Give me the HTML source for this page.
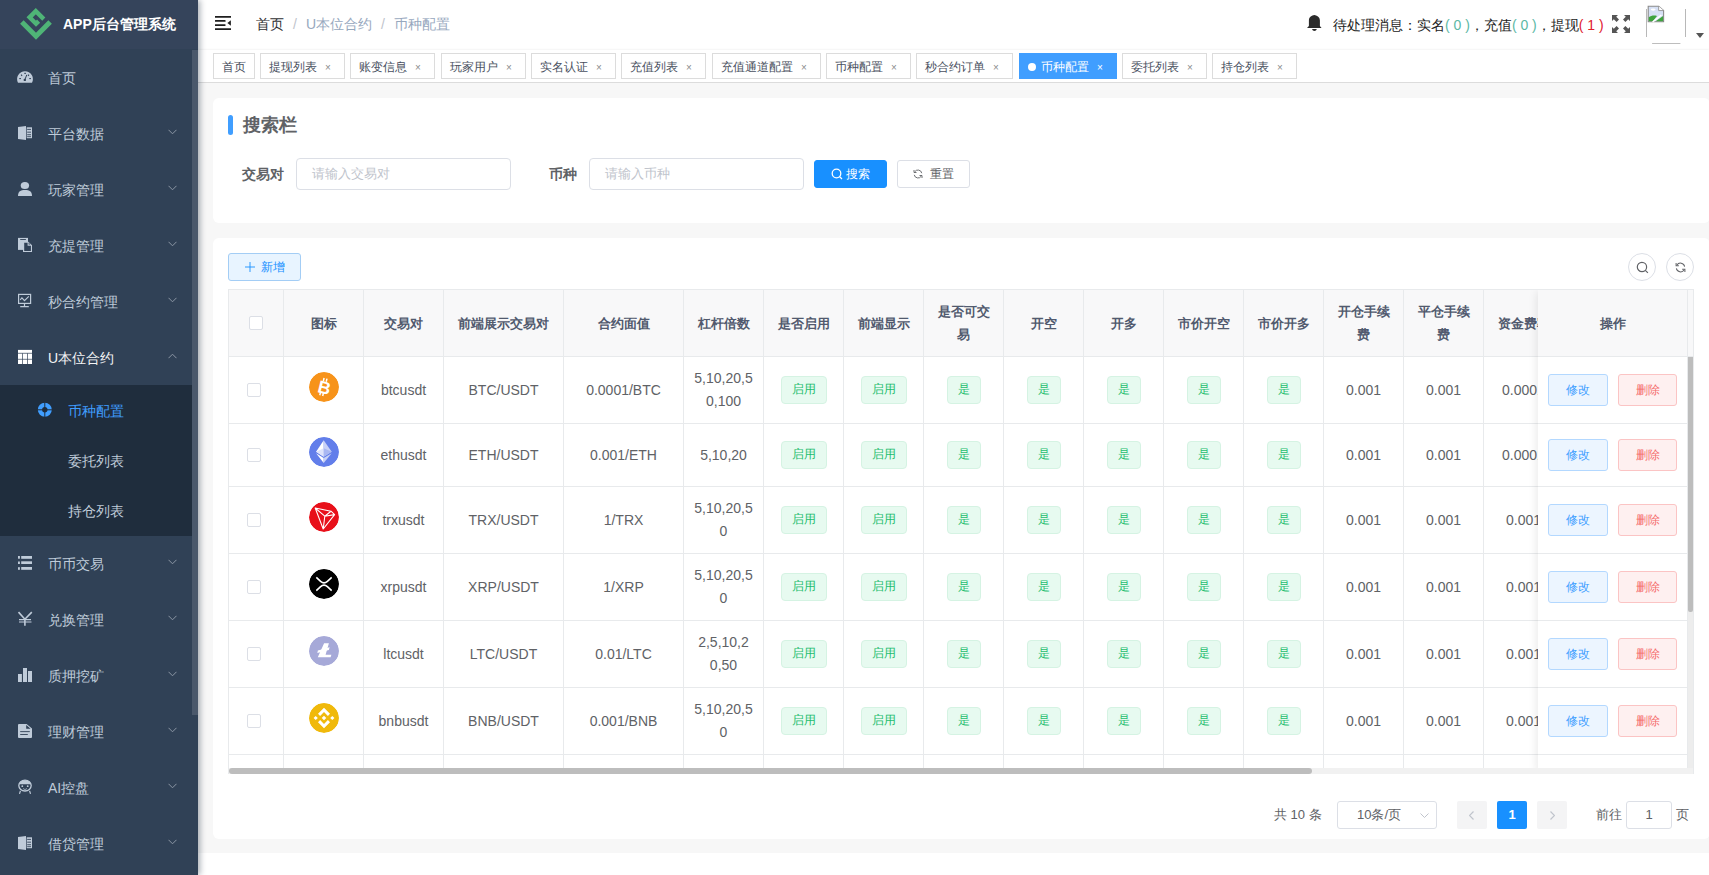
<!DOCTYPE html><html><head><meta charset="utf-8"><style>
*{box-sizing:border-box;margin:0;padding:0}
html,body{width:1709px;height:875px;overflow:hidden;background:#fff;font-family:"Liberation Sans",sans-serif}
.abs{position:absolute}
#sb{position:absolute;left:0;top:0;width:198px;height:875px;background:#304156;overflow:hidden;z-index:5;box-shadow:2px 0 6px rgba(0,21,41,.35)}
#sb .logo{position:absolute;left:0;top:0;width:198px;height:49px;background:#35445b}
#sb .title{position:absolute;left:63px;top:15px;color:#fff;font-weight:bold;font-size:14px;line-height:18px;white-space:nowrap}
.mi{position:absolute;left:0;width:192px;height:56px;color:#bfcbd9;font-size:14px}
.mi .ic{position:absolute;left:12px;top:12px;width:30px;height:30px}
.mi .tx{position:absolute;left:48px;top:0;line-height:56px;white-space:nowrap}
.mi .ar{position:absolute;left:168px;top:23px;width:9px;height:6px}
.sub{position:absolute;left:0;top:385px;width:192px;height:151px;background:#1f2d3d}
.si{position:absolute;left:0;width:192px;height:50px;color:#bfcbd9;font-size:14px;margin-top:1px}
.si .tx{position:absolute;left:68px;top:0;line-height:50px;white-space:nowrap}
#sbscroll{position:absolute;left:192px;top:50px;width:6px;height:665px;background:#4a586b}
#nav{position:absolute;left:198px;top:0;width:1511px;height:50px;background:#fff}
#tags{position:absolute;left:198px;top:50px;width:1511px;height:33px;background:#fff;border-bottom:1px solid #dcdcdc;box-shadow:0 1px 3px 0 rgba(0,0,0,.12),0 0 3px 0 rgba(0,0,0,.04)}
.tag{position:absolute;top:3px;height:26px;border:1px solid #dcdcdc;background:#fff;color:#495060;font-size:12px;line-height:24px;padding:1px 8px 0;white-space:nowrap}
.tag .x{display:inline-block;width:16px;text-align:center;color:#8c8c8c;font-size:10px;margin-left:3px}
.tag.on{background:#409eff;border-color:#409eff;color:#fff}
.tag.on .x{color:#fff}
.tag.on:before{content:"";display:inline-block;width:8px;height:8px;border-radius:50%;background:#fff;margin-right:5px;vertical-align:0px}
#main{position:absolute;left:198px;top:83px;width:1511px;height:792px;background:#f7f7f7}
.card{position:absolute;background:#fff;border-radius:6px}
.lbl{position:absolute;font-size:14px;font-weight:bold;color:#606266;line-height:32px;white-space:nowrap}
.inp{position:absolute;height:32px;border:1px solid #dcdfe6;border-radius:4px;background:#fff;font-size:13px;color:#c0c4cc;line-height:30px;padding-left:15px;white-space:nowrap}
.btn{position:absolute;height:28px;border-radius:3px;font-size:12px;line-height:26px;text-align:center;white-space:nowrap}
.th,.td{position:absolute;border-right:1px solid #e8eaec;border-bottom:1px solid #e8eaec;display:flex;align-items:center;justify-content:center;text-align:center}
.th{background:#f8f8f9;color:#515a6e;font-weight:bold;font-size:13px;line-height:23px}
.td{background:#fff;color:#606266;font-size:14px;line-height:23px}
.cb{width:14px;height:14px;border:1px solid #dcdfe6;border-radius:2px;background:#fff}
.etag{display:inline-block;height:28px;line-height:25px;padding:0 10px;font-size:12px;color:#1dbd6e;background:#e7faf0;border:1px solid #d5f3e3;border-radius:4px}
.coin{width:30px;height:30px;border-radius:50%}
.pbtn{position:absolute;height:32px;width:60px;border-radius:3px;font-size:12px;line-height:30px;text-align:center}
</style></head><body>
<div id="sb">
<div class="logo">
<svg class="abs" style="left:15px;top:4px" width="45" height="40" viewBox="15 4 45 40"><path d="M21.85 22 L36 36.2 L50.1 22.1" fill="none" stroke="#4fb477" stroke-width="5" stroke-linejoin="miter"/><path d="M43.8 19.1 L35.8 11.15 L29.6 17.35 L36 23.7 L38.6 21.1" fill="none" stroke="#4fb477" stroke-width="4.4" stroke-linejoin="miter"/></svg>
<div class="title">APP后台管理系统</div>
</div>
<div class="mi" style="top:50px"><svg class="ic" viewBox="0 0 30 30"><path d="M6 20.7 A7.9 7.9 0 1 1 20 20.7 Z" fill="#bfcbd9"/><g fill="#304156"><rect x="7.3" y="16" width="1.6" height="1.1"/><rect x="9" y="12.5" width="1.1" height="1.5" transform="rotate(-40 9.5 13.2)"/><rect x="12.3" y="10.8" width="1.6" height="1.1"/><rect x="16" y="12.5" width="1.1" height="1.5" transform="rotate(40 16.5 13.2)"/><rect x="17.3" y="16" width="1.6" height="1.1"/><circle cx="12.8" cy="17.9" r="1.2"/></g><path d="M12.8 17.9 L14.8 12.8" stroke="#304156" stroke-width="1"/></svg><div class="tx">首页</div></div>
<div class="mi" style="top:106px"><svg class="ic" viewBox="0 0 30 30"><path d="M6 9 L14 8 L14 22 L6 21 Z" fill="#bfcbd9"/><rect x="14.7" y="9.3" width="5.3" height="10.9" fill="#bfcbd9"/><g fill="#304156"><rect x="15.2" y="10.9" width="3.8" height="0.9"/><rect x="15.2" y="13.7" width="3.8" height="0.9"/><rect x="15.2" y="16.3" width="3.8" height="0.9"/><rect x="15.2" y="18.3" width="3.8" height="0.8"/></g></svg><div class="tx">平台数据</div><svg class="ar" viewBox="0 0 9 6"><path d="M0.5 0.8 L4.5 4.8 L8.5 0.8" fill="none" stroke="#8c97a5" stroke-width="1"/></svg></div>
<div class="mi" style="top:162px"><svg class="ic" viewBox="0 0 30 30"><ellipse cx="12.9" cy="11.5" rx="4.2" ry="3.6" fill="#bfcbd9"/><path d="M6 22 C6 17.5 8.5 16 13 16 C17.5 16 20 17.5 20 22 Z" fill="#bfcbd9"/></svg><div class="tx">玩家管理</div><svg class="ar" viewBox="0 0 9 6"><path d="M0.5 0.8 L4.5 4.8 L8.5 0.8" fill="none" stroke="#8c97a5" stroke-width="1"/></svg></div>
<div class="mi" style="top:218px"><svg class="ic" viewBox="0 0 30 30"><rect x="6" y="7.9" width="10" height="12" fill="#bfcbd9"/><rect x="8.2" y="9" width="5.7" height="0.9" fill="#304156"/><path d="M11 11.7 H16.3 L20 15.3 V22 H11 Z" fill="#bfcbd9"/><path d="M12.2 12.7 H15.6 V15.8 H18.9 V20.9 H12.2 Z" fill="#304156"/><path d="M16.6 12.6 L18.4 14.5 H16.6 Z" fill="#304156"/></svg><div class="tx">充提管理</div><svg class="ar" viewBox="0 0 9 6"><path d="M0.5 0.8 L4.5 4.8 L8.5 0.8" fill="none" stroke="#8c97a5" stroke-width="1"/></svg></div>
<div class="mi" style="top:274px"><svg class="ic" viewBox="0 0 30 30"><rect x="6.6" y="8.4" width="12" height="9" fill="none" stroke="#bfcbd9" stroke-width="1.2"/><path d="M8.2 13.8 L9.9 11.8 L12.5 14.7 L16.8 10.3" fill="none" stroke="#bfcbd9" stroke-width="1.1"/><path d="M12.5 17.8 V20.5 M8.2 20.6 H16.8" stroke="#bfcbd9" stroke-width="1.2"/></svg><div class="tx">秒合约管理</div><svg class="ar" viewBox="0 0 9 6"><path d="M0.5 0.8 L4.5 4.8 L8.5 0.8" fill="none" stroke="#8c97a5" stroke-width="1"/></svg></div>
<div class="mi" style="top:330px;color:#f4f4f5"><svg class="ic" viewBox="0 0 30 30"><rect x="6" y="7.9" width="14" height="14.1" fill="#fff"/><path d="M6 11.3 H20 M6 17.3 H20 M10.5 11.3 V22 M15.5 11.3 V22" stroke="#304156" stroke-width="0.7"/></svg><div class="tx">U本位合约</div><svg class="ar" viewBox="0 0 9 6"><path d="M0.5 5.2 L4.5 1.2 L8.5 5.2" fill="none" stroke="#8c97a5" stroke-width="1"/></svg></div>
<div class="sub">
<div class="si" style="top:0;color:#409eff"><svg class="abs" style="left:30px;top:10px" width="30" height="30" viewBox="0 0 30 30"><circle cx="14.8" cy="13.8" r="4.85" fill="none" stroke="#409eff" stroke-width="4.3"/><path d="M14.8 6V21.6M7 13.8H22.6" stroke="#1f2d3d" stroke-width="1"/></svg><div class="tx">币种配置</div></div>
<div class="si" style="top:50px"><div class="tx">委托列表</div></div>
<div class="si" style="top:100px"><div class="tx">持仓列表</div></div>
</div>
<div class="mi" style="top:536px"><svg class="ic" viewBox="0 0 30 30"><g fill="#bfcbd9"><rect x="6" y="8" width="1.9" height="2.7"/><rect x="6" y="13.5" width="1.9" height="2.5"/><rect x="6" y="19.2" width="1.9" height="2.6"/><rect x="9.2" y="8" width="10.8" height="2.8"/><rect x="9.2" y="13.3" width="10.8" height="2.7"/><rect x="9.2" y="19" width="10.8" height="2.8"/></g></svg><div class="tx">币币交易</div><svg class="ar" viewBox="0 0 9 6"><path d="M0.5 0.8 L4.5 4.8 L8.5 0.8" fill="none" stroke="#8c97a5" stroke-width="1"/></svg></div>
<div class="mi" style="top:592px"><svg class="ic" viewBox="0 0 30 30"><path d="M6.5 8.1 L12.9 15.2 L19.8 8.1 M12.9 15 V21.8" fill="none" stroke="#bfcbd9" stroke-width="1.6"/><path d="M7 15.6 H19 M7 18 H19.5" stroke="#bfcbd9" stroke-width="1.2"/></svg><div class="tx">兑换管理</div><svg class="ar" viewBox="0 0 9 6"><path d="M0.5 0.8 L4.5 4.8 L8.5 0.8" fill="none" stroke="#8c97a5" stroke-width="1"/></svg></div>
<div class="mi" style="top:648px"><svg class="ic" viewBox="0 0 30 30"><g fill="#bfcbd9"><rect x="6" y="14" width="3.9" height="8"/><rect x="11" y="8" width="4" height="14"/><rect x="16" y="11" width="4" height="11"/></g></svg><div class="tx">质押挖矿</div><svg class="ar" viewBox="0 0 9 6"><path d="M0.5 0.8 L4.5 4.8 L8.5 0.8" fill="none" stroke="#8c97a5" stroke-width="1"/></svg></div>
<div class="mi" style="top:704px"><svg class="ic" viewBox="0 0 30 30"><path d="M7 7.9 H14.6 L20 12.4 V21 Q20 22 19 22 H7 Q6 22 6 21 V8.9 Q6 7.9 7 7.9 Z" fill="#bfcbd9"/><path d="M14.2 9 V12.8 H18.6 Z" fill="#304156"/><rect x="8.2" y="15.2" width="9.6" height="0.9" fill="#304156"/><rect x="8.2" y="18.1" width="7.6" height="0.9" fill="#304156"/></svg><div class="tx">理财管理</div><svg class="ar" viewBox="0 0 9 6"><path d="M0.5 0.8 L4.5 4.8 L8.5 0.8" fill="none" stroke="#8c97a5" stroke-width="1"/></svg></div>
<div class="mi" style="top:760px"><svg class="ic" viewBox="0 0 30 30"><ellipse cx="13" cy="13.6" rx="6.2" ry="5.4" fill="none" stroke="#bfcbd9" stroke-width="1.3"/><path d="M7 12.2 A6.2 5.4 0 0 1 19 12.2 Z" fill="#bfcbd9"/><circle cx="10.3" cy="14.2" r="0.9" fill="#bfcbd9"/><circle cx="15.7" cy="14.2" r="0.9" fill="#bfcbd9"/><path d="M11 16.5 L13 17.6 L15 16.5" fill="none" stroke="#bfcbd9" stroke-width="0.7"/><path d="M8.4 18.8 L7.5 21.8 M17.6 18.8 L18.5 21.8" stroke="#bfcbd9" stroke-width="1.2"/></svg><div class="tx">AI控盘</div><svg class="ar" viewBox="0 0 9 6"><path d="M0.5 0.8 L4.5 4.8 L8.5 0.8" fill="none" stroke="#8c97a5" stroke-width="1"/></svg></div>
<div class="mi" style="top:816px"><svg class="ic" viewBox="0 0 30 30"><path d="M6 9 L14 8 L14 22 L6 21 Z" fill="#bfcbd9"/><rect x="14.7" y="9.3" width="5.3" height="10.9" fill="#bfcbd9"/><g fill="#304156"><rect x="15.2" y="10.9" width="3.8" height="0.9"/><rect x="15.2" y="13.7" width="3.8" height="0.9"/><rect x="15.2" y="16.3" width="3.8" height="0.9"/><rect x="15.2" y="18.3" width="3.8" height="0.8"/></g></svg><div class="tx">借贷管理</div><svg class="ar" viewBox="0 0 9 6"><path d="M0.5 0.8 L4.5 4.8 L8.5 0.8" fill="none" stroke="#8c97a5" stroke-width="1"/></svg></div>
<div id="sbscroll"></div>
</div>
<div id="nav">
<svg class="abs" style="left:17px;top:15px" width="16" height="16" viewBox="0 0 16 16"><path d="M0.2 1.8H15.8M0.5 5.95H9.8M0.5 10.1H9.8M0.2 14.05H15.8" stroke="#1f1f1f" stroke-width="1.8" stroke-linecap="round"/><path d="M15.9 5.2 L12.4 7.95 L15.9 10.7 Z" fill="#1f1f1f"/></svg>
<div class="abs" style="left:58px;top:-1px;line-height:50px;font-size:14px;white-space:nowrap"><span style="color:#303133">首页</span><span style="color:#c0c4cc;margin:0 9px;">/</span><span style="color:#97a8be">U本位合约</span><span style="color:#c0c4cc;margin:0 9px;">/</span><span style="color:#97a8be">币种配置</span></div>
<svg class="abs" style="left:1109px;top:15px" width="15" height="17" viewBox="0 0 15 17"><path d="M7.3 0 C9.6 0.6 12.9 1.4 12.9 5.6 V11 L14.6 12.9 H0 L1.9 11 V5.6 C1.9 1.4 5 0.6 7.3 0 Z" fill="#2b2b2b"/><path d="M5 14.1 H9.8 C9.4 15.4 8.5 16 7.4 16 C6.3 16 5.4 15.4 5 14.1 Z" fill="#2b2b2b"/></svg>
<div class="abs" style="left:1135px;top:0;line-height:50px;font-size:14px;color:#222;white-space:nowrap">待处理消息：实名<span style="color:#5cb8a5">( 0 )</span>，充值<span style="color:#5cb8a5">( 0 )</span>，提现<span style="color:#e0202f">( 1 )</span></div>
<svg class="abs" style="left:1414px;top:15px" width="18" height="18" viewBox="0 0 18 18"><g fill="#555"><path d="M0 0H6L4.2 1.8L7 4.6L4.6 7L1.8 4.2L0 6Z"/><path d="M18 0H12L13.8 1.8L11 4.6L13.4 7L16.2 4.2L18 6Z"/><path d="M0 18H6L4.2 16.2L7 13.4L4.6 11L1.8 13.8L0 12Z"/><path d="M18 18H12L13.8 16.2L11 13.4L13.4 11L16.2 13.8L18 12Z"/></g></svg>
<svg class="abs" style="left:1446px;top:4px" width="44" height="42" viewBox="0 0 44 42"><path d="M2.5 5V33M41.5 5V33" stroke="#b8b8b8" stroke-width="1"/><path d="M8.5 39.5H36" stroke="#bdbdbd" stroke-width="1" stroke-linecap="round"/><g transform="translate(4.2 2.2) scale(1.1 0.97) translate(-2.5 -1.5)"><path d="M2.5 1.5 H12 L16.5 6 V17.5 H2.5 Z" fill="#d6e0f5" stroke="#8a8a8a" stroke-width="1"/><path d="M12 1.5 V6 H16.5" fill="#fff" stroke="#8a8a8a" stroke-width="0.8"/><ellipse cx="7" cy="5" rx="2.2" ry="1.1" fill="#fff"/><path d="M3 17 V13 C5 11 8 10.5 10.5 11.5 L6.8 17 Z" fill="#3fa33f"/><path d="M9.2 17 L16 11.5 V17 Z" fill="#3fa33f"/><path d="M6.5 17.8 L14.5 10.5" stroke="#fff" stroke-width="1.4"/></g></svg>
<svg class="abs" style="left:1498px;top:33px" width="8" height="5" viewBox="0 0 8 5"><path d="M0 0H8L4 5Z" fill="#555"/></svg>
</div>
<div id="tags">
<div class="tag" style="left:15px">首页</div>
<div class="tag" style="left:62px">提现列表<span class="x">×</span></div>
<div class="tag" style="left:152px">账变信息<span class="x">×</span></div>
<div class="tag" style="left:243px">玩家用户<span class="x">×</span></div>
<div class="tag" style="left:333px">实名认证<span class="x">×</span></div>
<div class="tag" style="left:423px">充值列表<span class="x">×</span></div>
<div class="tag" style="left:514px">充值通道配置<span class="x">×</span></div>
<div class="tag" style="left:628px">币种配置<span class="x">×</span></div>
<div class="tag" style="left:718px">秒合约订单<span class="x">×</span></div>
<div class="tag on" style="left:821px">币种配置<span class="x">×</span></div>
<div class="tag" style="left:924px">委托列表<span class="x">×</span></div>
<div class="tag" style="left:1014px">持仓列表<span class="x">×</span></div>
</div>
<div id="main">
<div class="card" style="left:15px;top:15px;width:1497px;height:125px">
<div class="abs" style="left:15px;top:17px;width:5px;height:20px;background:#409eff;border-radius:3px"></div>
<div class="abs" style="left:30px;top:12px;font-size:18px;font-weight:bold;color:#606266;line-height:30px">搜索栏</div>
<div class="lbl" style="left:29px;top:60px">交易对</div>
<div class="inp" style="left:83px;top:60px;width:215px">请输入交易对</div>
<div class="lbl" style="left:336px;top:60px">币种</div>
<div class="inp" style="left:376px;top:60px;width:215px">请输入币种</div>
<div class="btn" style="left:601px;top:62px;width:73px;background:#1890ff;color:#fff;border:1px solid #1890ff"><svg style="vertical-align:-2px;margin-right:3px" width="12" height="12" viewBox="0 0 12 12"><circle cx="5.5" cy="5.5" r="4.3" fill="none" stroke="#fff" stroke-width="1.3"/><path d="M8.6 8.6L11 11" stroke="#fff" stroke-width="1.3"/></svg>搜索</div>
<div class="btn" style="left:684px;top:62px;width:73px;background:#fff;color:#606266;border:1px solid #dcdfe6"><svg style="vertical-align:-1px;margin-right:7px" width="10" height="10" viewBox="0 0 12 12"><path d="M10.5 5 A4.6 4.6 0 0 0 2 3.5 M1.5 7 A4.6 4.6 0 0 0 10 8.5" fill="none" stroke="#606266" stroke-width="1.1"/><path d="M1.2 1.2V4.2H4.2M10.8 10.8V7.8H7.8" fill="none" stroke="#606266" stroke-width="1.1"/></svg>重置</div>
</div>
<div class="card" style="left:15px;top:155px;width:1497px;height:601px">
<div class="btn" style="left:15px;top:15px;width:73px;background:#e8f4ff;color:#1890ff;border:1px solid #a3cdf5"><svg style="vertical-align:-1px;margin-right:6px" width="10" height="10" viewBox="0 0 10 10"><path d="M5 0V10M0 5H10" stroke="#1890ff" stroke-width="0.9"/></svg>新增</div>
<div class="abs" style="left:1415px;top:15px;width:28px;height:28px;border:1px solid #dcdfe6;border-radius:50%"><svg class="abs" style="left:7px;top:7px" width="13" height="13" viewBox="0 0 12 12"><circle cx="5.5" cy="5.5" r="4.3" fill="none" stroke="#606266" stroke-width="1.1"/><path d="M8.6 8.6L11 11" stroke="#606266" stroke-width="1.1"/></svg></div>
<div class="abs" style="left:1453px;top:15px;width:28px;height:28px;border:1px solid #dcdfe6;border-radius:50%"><svg class="abs" style="left:8px;top:8px" width="11" height="11" viewBox="0 0 12 12"><path d="M10.5 5 A4.6 4.6 0 0 0 2 3.5 M1.5 7 A4.6 4.6 0 0 0 10 8.5" fill="none" stroke="#606266" stroke-width="1.1"/><path d="M1.2 1.2V4.2H4.2M10.8 10.8V7.8H7.8" fill="none" stroke="#606266" stroke-width="1.1"/></svg></div>
</div>
</div>
<div class="abs" style="left:228px;top:289px;width:1466px;height:485px;border:1px solid #e8eaec;border-bottom:none;overflow:hidden;background:#fff">
<div class="th" style="left:0px;top:0;width:55px;height:67px"><div class="cb"></div></div>
<div class="th" style="left:55px;top:0;width:80px;height:67px">图标</div>
<div class="th" style="left:135px;top:0;width:80px;height:67px">交易对</div>
<div class="th" style="left:215px;top:0;width:120px;height:67px">前端展示交易对</div>
<div class="th" style="left:335px;top:0;width:120px;height:67px">合约面值</div>
<div class="th" style="left:455px;top:0;width:80px;height:67px">杠杆倍数</div>
<div class="th" style="left:535px;top:0;width:80px;height:67px">是否启用</div>
<div class="th" style="left:615px;top:0;width:80px;height:67px">前端显示</div>
<div class="th" style="left:695px;top:0;width:80px;height:67px">是否可交<br>易</div>
<div class="th" style="left:775px;top:0;width:80px;height:67px">开空</div>
<div class="th" style="left:855px;top:0;width:80px;height:67px">开多</div>
<div class="th" style="left:935px;top:0;width:80px;height:67px">市价开空</div>
<div class="th" style="left:1015px;top:0;width:80px;height:67px">市价开多</div>
<div class="th" style="left:1095px;top:0;width:80px;height:67px">开仓手续<br>费</div>
<div class="th" style="left:1175px;top:0;width:80px;height:67px">平仓手续<br>费</div>
<div class="th" style="left:1255px;top:0;width:80px;height:67px">资金费率</div>
<div class="th" style="left:1335px;top:0;width:80px;height:67px"></div>
<div class="td" style="left:0px;top:67px;width:55px;height:67px"><div class="cb" style="margin-left:-4px"></div></div>
<div class="td" style="left:55px;top:67px;width:80px;height:67px"><div style="height:30px;margin-top:-6px"><svg class="coin" viewBox="0 0 30 30"><circle cx="15" cy="15" r="15" fill="#f7931a"/><g transform="rotate(14 15 15)"><text x="15.6" y="21.6" text-anchor="middle" font-family="Liberation Sans" font-weight="bold" font-size="17.5" fill="#fff">B</text><path d="M12.9 6.2v3.2M15.9 6.2v3.2M12.9 20.8v3.2M15.9 20.8v3.2" stroke="#fff" stroke-width="1.5"/></g></svg></div></div>
<div class="td" style="left:135px;top:67px;width:80px;height:67px"><div style="padding:0 10px;word-break:break-all">btcusdt</div></div>
<div class="td" style="left:215px;top:67px;width:120px;height:67px"><div style="padding:0 10px;word-break:break-all">BTC/USDT</div></div>
<div class="td" style="left:335px;top:67px;width:120px;height:67px"><div style="padding:0 10px;word-break:break-all">0.0001/BTC</div></div>
<div class="td" style="left:455px;top:67px;width:80px;height:67px"><div style="padding:0 10px;word-break:break-all">5,10,20,5<br>0,100</div></div>
<div class="td" style="left:535px;top:67px;width:80px;height:67px"><span class="etag">启用</span></div>
<div class="td" style="left:615px;top:67px;width:80px;height:67px"><span class="etag">启用</span></div>
<div class="td" style="left:695px;top:67px;width:80px;height:67px"><span class="etag">是</span></div>
<div class="td" style="left:775px;top:67px;width:80px;height:67px"><span class="etag">是</span></div>
<div class="td" style="left:855px;top:67px;width:80px;height:67px"><span class="etag">是</span></div>
<div class="td" style="left:935px;top:67px;width:80px;height:67px"><span class="etag">是</span></div>
<div class="td" style="left:1015px;top:67px;width:80px;height:67px"><span class="etag">是</span></div>
<div class="td" style="left:1095px;top:67px;width:80px;height:67px"><div style="padding:0 10px;word-break:break-all">0.001</div></div>
<div class="td" style="left:1175px;top:67px;width:80px;height:67px"><div style="padding:0 10px;word-break:break-all">0.001</div></div>
<div class="td" style="left:1255px;top:67px;width:80px;height:67px"><div style="padding:0 10px;word-break:break-all">0.0001</div></div>
<div class="td" style="left:1335px;top:67px;width:80px;height:67px"><div style="padding:0 10px;word-break:break-all"></div></div>
<div class="td" style="left:0px;top:134px;width:55px;height:63px"><div class="cb" style="margin-left:-4px"></div></div>
<div class="td" style="left:55px;top:134px;width:80px;height:63px"><div style="height:30px;margin-top:-6px"><svg class="coin" viewBox="0 0 30 30"><circle cx="15" cy="15" r="15" fill="#627eea"/><path d="M14.7 3.2 L7.1 14.7 L14.7 19.7 Z" fill="#fff"/><path d="M14.7 3.2 L22.7 14.7 L14.7 19.7 Z" fill="#c8d1f6"/><path d="M7.1 14.7 L14.7 11.3 L14.7 19.7 Z" fill="#dfe4fb"/><path d="M22.7 14.7 L14.7 11.3 L14.7 19.7 Z" fill="#a9b7f2"/><path d="M7.1 16.3 L14.7 21.1 L14.7 26.1 Z" fill="#fff"/><path d="M22.7 16.3 L14.7 21.1 L14.7 26.1 Z" fill="#c8d1f6"/></svg></div></div>
<div class="td" style="left:135px;top:134px;width:80px;height:63px"><div style="padding:0 10px;word-break:break-all">ethusdt</div></div>
<div class="td" style="left:215px;top:134px;width:120px;height:63px"><div style="padding:0 10px;word-break:break-all">ETH/USDT</div></div>
<div class="td" style="left:335px;top:134px;width:120px;height:63px"><div style="padding:0 10px;word-break:break-all">0.001/ETH</div></div>
<div class="td" style="left:455px;top:134px;width:80px;height:63px"><div style="padding:0 10px;word-break:break-all">5,10,20</div></div>
<div class="td" style="left:535px;top:134px;width:80px;height:63px"><span class="etag">启用</span></div>
<div class="td" style="left:615px;top:134px;width:80px;height:63px"><span class="etag">启用</span></div>
<div class="td" style="left:695px;top:134px;width:80px;height:63px"><span class="etag">是</span></div>
<div class="td" style="left:775px;top:134px;width:80px;height:63px"><span class="etag">是</span></div>
<div class="td" style="left:855px;top:134px;width:80px;height:63px"><span class="etag">是</span></div>
<div class="td" style="left:935px;top:134px;width:80px;height:63px"><span class="etag">是</span></div>
<div class="td" style="left:1015px;top:134px;width:80px;height:63px"><span class="etag">是</span></div>
<div class="td" style="left:1095px;top:134px;width:80px;height:63px"><div style="padding:0 10px;word-break:break-all">0.001</div></div>
<div class="td" style="left:1175px;top:134px;width:80px;height:63px"><div style="padding:0 10px;word-break:break-all">0.001</div></div>
<div class="td" style="left:1255px;top:134px;width:80px;height:63px"><div style="padding:0 10px;word-break:break-all">0.0001</div></div>
<div class="td" style="left:1335px;top:134px;width:80px;height:63px"><div style="padding:0 10px;word-break:break-all"></div></div>
<div class="td" style="left:0px;top:197px;width:55px;height:67px"><div class="cb" style="margin-left:-4px"></div></div>
<div class="td" style="left:55px;top:197px;width:80px;height:67px"><div style="height:30px;margin-top:-6px"><svg class="coin" viewBox="0 0 30 30"><circle cx="15" cy="15" r="15" fill="#e8101a"/><path d="M6.2 6 L22 9.2 L25.6 12.6 L14.2 27 Z M6.2 6 L15.8 14.2 L14.2 27 M15.8 14.2 L22 9.2 M15.8 14.2 L25.6 12.6" fill="none" stroke="#fff" stroke-width="1.1" stroke-linejoin="round"/></svg></div></div>
<div class="td" style="left:135px;top:197px;width:80px;height:67px"><div style="padding:0 10px;word-break:break-all">trxusdt</div></div>
<div class="td" style="left:215px;top:197px;width:120px;height:67px"><div style="padding:0 10px;word-break:break-all">TRX/USDT</div></div>
<div class="td" style="left:335px;top:197px;width:120px;height:67px"><div style="padding:0 10px;word-break:break-all">1/TRX</div></div>
<div class="td" style="left:455px;top:197px;width:80px;height:67px"><div style="padding:0 10px;word-break:break-all">5,10,20,5<br>0</div></div>
<div class="td" style="left:535px;top:197px;width:80px;height:67px"><span class="etag">启用</span></div>
<div class="td" style="left:615px;top:197px;width:80px;height:67px"><span class="etag">启用</span></div>
<div class="td" style="left:695px;top:197px;width:80px;height:67px"><span class="etag">是</span></div>
<div class="td" style="left:775px;top:197px;width:80px;height:67px"><span class="etag">是</span></div>
<div class="td" style="left:855px;top:197px;width:80px;height:67px"><span class="etag">是</span></div>
<div class="td" style="left:935px;top:197px;width:80px;height:67px"><span class="etag">是</span></div>
<div class="td" style="left:1015px;top:197px;width:80px;height:67px"><span class="etag">是</span></div>
<div class="td" style="left:1095px;top:197px;width:80px;height:67px"><div style="padding:0 10px;word-break:break-all">0.001</div></div>
<div class="td" style="left:1175px;top:197px;width:80px;height:67px"><div style="padding:0 10px;word-break:break-all">0.001</div></div>
<div class="td" style="left:1255px;top:197px;width:80px;height:67px"><div style="padding:0 10px;word-break:break-all">0.001</div></div>
<div class="td" style="left:1335px;top:197px;width:80px;height:67px"><div style="padding:0 10px;word-break:break-all"></div></div>
<div class="td" style="left:0px;top:264px;width:55px;height:67px"><div class="cb" style="margin-left:-4px"></div></div>
<div class="td" style="left:55px;top:264px;width:80px;height:67px"><div style="height:30px;margin-top:-6px"><svg class="coin" viewBox="0 0 30 30"><circle cx="15" cy="15" r="15" fill="#000"/><path d="M7.3 8.3 L11.6 12.3 Q15 15.4 18.4 12.3 L22.7 8.3 M7.3 21.7 L11.6 17.7 Q15 14.6 18.4 17.7 L22.7 21.7" fill="none" stroke="#fff" stroke-width="1.6"/></svg></div></div>
<div class="td" style="left:135px;top:264px;width:80px;height:67px"><div style="padding:0 10px;word-break:break-all">xrpusdt</div></div>
<div class="td" style="left:215px;top:264px;width:120px;height:67px"><div style="padding:0 10px;word-break:break-all">XRP/USDT</div></div>
<div class="td" style="left:335px;top:264px;width:120px;height:67px"><div style="padding:0 10px;word-break:break-all">1/XRP</div></div>
<div class="td" style="left:455px;top:264px;width:80px;height:67px"><div style="padding:0 10px;word-break:break-all">5,10,20,5<br>0</div></div>
<div class="td" style="left:535px;top:264px;width:80px;height:67px"><span class="etag">启用</span></div>
<div class="td" style="left:615px;top:264px;width:80px;height:67px"><span class="etag">启用</span></div>
<div class="td" style="left:695px;top:264px;width:80px;height:67px"><span class="etag">是</span></div>
<div class="td" style="left:775px;top:264px;width:80px;height:67px"><span class="etag">是</span></div>
<div class="td" style="left:855px;top:264px;width:80px;height:67px"><span class="etag">是</span></div>
<div class="td" style="left:935px;top:264px;width:80px;height:67px"><span class="etag">是</span></div>
<div class="td" style="left:1015px;top:264px;width:80px;height:67px"><span class="etag">是</span></div>
<div class="td" style="left:1095px;top:264px;width:80px;height:67px"><div style="padding:0 10px;word-break:break-all">0.001</div></div>
<div class="td" style="left:1175px;top:264px;width:80px;height:67px"><div style="padding:0 10px;word-break:break-all">0.001</div></div>
<div class="td" style="left:1255px;top:264px;width:80px;height:67px"><div style="padding:0 10px;word-break:break-all">0.001</div></div>
<div class="td" style="left:1335px;top:264px;width:80px;height:67px"><div style="padding:0 10px;word-break:break-all"></div></div>
<div class="td" style="left:0px;top:331px;width:55px;height:67px"><div class="cb" style="margin-left:-4px"></div></div>
<div class="td" style="left:55px;top:331px;width:80px;height:67px"><div style="height:30px;margin-top:-6px"><svg class="coin" viewBox="0 0 30 30"><circle cx="15" cy="15" r="15" fill="#a6a9d8"/><path d="M15.1 7.3 H19.9 L16.6 18.8 H22.4 L21.6 21.3 H8.8 Z" fill="#fff"/><path d="M8.9 14.4 L20.6 11.3 L19.9 14 L8.3 17 Z" fill="#fff"/></svg></div></div>
<div class="td" style="left:135px;top:331px;width:80px;height:67px"><div style="padding:0 10px;word-break:break-all">ltcusdt</div></div>
<div class="td" style="left:215px;top:331px;width:120px;height:67px"><div style="padding:0 10px;word-break:break-all">LTC/USDT</div></div>
<div class="td" style="left:335px;top:331px;width:120px;height:67px"><div style="padding:0 10px;word-break:break-all">0.01/LTC</div></div>
<div class="td" style="left:455px;top:331px;width:80px;height:67px"><div style="padding:0 10px;word-break:break-all">2,5,10,2<br>0,50</div></div>
<div class="td" style="left:535px;top:331px;width:80px;height:67px"><span class="etag">启用</span></div>
<div class="td" style="left:615px;top:331px;width:80px;height:67px"><span class="etag">启用</span></div>
<div class="td" style="left:695px;top:331px;width:80px;height:67px"><span class="etag">是</span></div>
<div class="td" style="left:775px;top:331px;width:80px;height:67px"><span class="etag">是</span></div>
<div class="td" style="left:855px;top:331px;width:80px;height:67px"><span class="etag">是</span></div>
<div class="td" style="left:935px;top:331px;width:80px;height:67px"><span class="etag">是</span></div>
<div class="td" style="left:1015px;top:331px;width:80px;height:67px"><span class="etag">是</span></div>
<div class="td" style="left:1095px;top:331px;width:80px;height:67px"><div style="padding:0 10px;word-break:break-all">0.001</div></div>
<div class="td" style="left:1175px;top:331px;width:80px;height:67px"><div style="padding:0 10px;word-break:break-all">0.001</div></div>
<div class="td" style="left:1255px;top:331px;width:80px;height:67px"><div style="padding:0 10px;word-break:break-all">0.001</div></div>
<div class="td" style="left:1335px;top:331px;width:80px;height:67px"><div style="padding:0 10px;word-break:break-all"></div></div>
<div class="td" style="left:0px;top:398px;width:55px;height:67px"><div class="cb" style="margin-left:-4px"></div></div>
<div class="td" style="left:55px;top:398px;width:80px;height:67px"><div style="height:30px;margin-top:-6px"><svg class="coin" viewBox="0 0 30 30"><circle cx="15" cy="15" r="15" fill="#f0b90b"/><g fill="#fff"><path d="M15 4.8 L21 10.8 L18.9 12.9 L15 9 L11.1 12.9 L9 10.8 Z"/><path d="M15 25.2 L21 19.2 L18.9 17.1 L15 21 L11.1 17.1 L9 19.2 Z"/><path d="M15 12.7 L17.3 15 L15 17.3 L12.7 15 Z"/><path d="M6.7 12.9 L8.8 15 L6.7 17.1 L4.6 15 Z"/><path d="M23.3 12.9 L25.4 15 L23.3 17.1 L21.2 15 Z"/></g></svg></div></div>
<div class="td" style="left:135px;top:398px;width:80px;height:67px"><div style="padding:0 10px;word-break:break-all">bnbusdt</div></div>
<div class="td" style="left:215px;top:398px;width:120px;height:67px"><div style="padding:0 10px;word-break:break-all">BNB/USDT</div></div>
<div class="td" style="left:335px;top:398px;width:120px;height:67px"><div style="padding:0 10px;word-break:break-all">0.001/BNB</div></div>
<div class="td" style="left:455px;top:398px;width:80px;height:67px"><div style="padding:0 10px;word-break:break-all">5,10,20,5<br>0</div></div>
<div class="td" style="left:535px;top:398px;width:80px;height:67px"><span class="etag">启用</span></div>
<div class="td" style="left:615px;top:398px;width:80px;height:67px"><span class="etag">启用</span></div>
<div class="td" style="left:695px;top:398px;width:80px;height:67px"><span class="etag">是</span></div>
<div class="td" style="left:775px;top:398px;width:80px;height:67px"><span class="etag">是</span></div>
<div class="td" style="left:855px;top:398px;width:80px;height:67px"><span class="etag">是</span></div>
<div class="td" style="left:935px;top:398px;width:80px;height:67px"><span class="etag">是</span></div>
<div class="td" style="left:1015px;top:398px;width:80px;height:67px"><span class="etag">是</span></div>
<div class="td" style="left:1095px;top:398px;width:80px;height:67px"><div style="padding:0 10px;word-break:break-all">0.001</div></div>
<div class="td" style="left:1175px;top:398px;width:80px;height:67px"><div style="padding:0 10px;word-break:break-all">0.001</div></div>
<div class="td" style="left:1255px;top:398px;width:80px;height:67px"><div style="padding:0 10px;word-break:break-all">0.001</div></div>
<div class="td" style="left:1335px;top:398px;width:80px;height:67px"><div style="padding:0 10px;word-break:break-all"></div></div>
<div class="td" style="left:0px;top:465px;width:55px;height:67px"><div class="cb" style="margin-left:-4px"></div></div>
<div class="td" style="left:55px;top:465px;width:80px;height:67px"><div style="height:30px;margin-top:-6px"><svg class="coin" viewBox="0 0 30 30"><circle cx="15" cy="15" r="15" fill="#f7931a"/><g transform="rotate(14 15 15)"><text x="15.6" y="21.6" text-anchor="middle" font-family="Liberation Sans" font-weight="bold" font-size="17.5" fill="#fff">B</text><path d="M12.9 6.2v3.2M15.9 6.2v3.2M12.9 20.8v3.2M15.9 20.8v3.2" stroke="#fff" stroke-width="1.5"/></g></svg></div></div>
<div class="td" style="left:135px;top:465px;width:80px;height:67px"><div style="padding:0 10px;word-break:break-all">dogeusdt</div></div>
<div class="td" style="left:215px;top:465px;width:120px;height:67px"><div style="padding:0 10px;word-break:break-all">DOGE/USDT</div></div>
<div class="td" style="left:335px;top:465px;width:120px;height:67px"><div style="padding:0 10px;word-break:break-all">1/DOGE</div></div>
<div class="td" style="left:455px;top:465px;width:80px;height:67px"><div style="padding:0 10px;word-break:break-all">5,10,20</div></div>
<div class="td" style="left:535px;top:465px;width:80px;height:67px"><span class="etag">启用</span></div>
<div class="td" style="left:615px;top:465px;width:80px;height:67px"><span class="etag">启用</span></div>
<div class="td" style="left:695px;top:465px;width:80px;height:67px"><span class="etag">是</span></div>
<div class="td" style="left:775px;top:465px;width:80px;height:67px"><span class="etag">是</span></div>
<div class="td" style="left:855px;top:465px;width:80px;height:67px"><span class="etag">是</span></div>
<div class="td" style="left:935px;top:465px;width:80px;height:67px"><span class="etag">是</span></div>
<div class="td" style="left:1015px;top:465px;width:80px;height:67px"><span class="etag">是</span></div>
<div class="td" style="left:1095px;top:465px;width:80px;height:67px"><div style="padding:0 10px;word-break:break-all">0.001</div></div>
<div class="td" style="left:1175px;top:465px;width:80px;height:67px"><div style="padding:0 10px;word-break:break-all">0.001</div></div>
<div class="td" style="left:1255px;top:465px;width:80px;height:67px"><div style="padding:0 10px;word-break:break-all">0.001</div></div>
<div class="td" style="left:1335px;top:465px;width:80px;height:67px"><div style="padding:0 10px;word-break:break-all"></div></div>
<div class="abs" style="left:1309px;top:0;width:150px;height:485px;background:#fff;box-shadow:-4px 0 8px -2px rgba(0,0,0,.08)">
<div class="th" style="left:0;top:0;width:149px;height:67px;border-right:none">操作</div>
<div class="td" style="left:0;top:67px;width:149px;height:67px;border-right:none"><div style="position:relative;width:149px;height:100%"><div class="pbtn" style="left:10px;top:17px;background:#ecf5ff;border:1px solid #b3d8ff;color:#409eff">修改</div><div class="pbtn" style="left:80px;top:17px;width:59px;background:#fef0f0;border:1px solid #fbc4c4;color:#f56c6c">删除</div></div></div>
<div class="td" style="left:0;top:134px;width:149px;height:63px;border-right:none"><div style="position:relative;width:149px;height:100%"><div class="pbtn" style="left:10px;top:15px;background:#ecf5ff;border:1px solid #b3d8ff;color:#409eff">修改</div><div class="pbtn" style="left:80px;top:15px;width:59px;background:#fef0f0;border:1px solid #fbc4c4;color:#f56c6c">删除</div></div></div>
<div class="td" style="left:0;top:197px;width:149px;height:67px;border-right:none"><div style="position:relative;width:149px;height:100%"><div class="pbtn" style="left:10px;top:17px;background:#ecf5ff;border:1px solid #b3d8ff;color:#409eff">修改</div><div class="pbtn" style="left:80px;top:17px;width:59px;background:#fef0f0;border:1px solid #fbc4c4;color:#f56c6c">删除</div></div></div>
<div class="td" style="left:0;top:264px;width:149px;height:67px;border-right:none"><div style="position:relative;width:149px;height:100%"><div class="pbtn" style="left:10px;top:17px;background:#ecf5ff;border:1px solid #b3d8ff;color:#409eff">修改</div><div class="pbtn" style="left:80px;top:17px;width:59px;background:#fef0f0;border:1px solid #fbc4c4;color:#f56c6c">删除</div></div></div>
<div class="td" style="left:0;top:331px;width:149px;height:67px;border-right:none"><div style="position:relative;width:149px;height:100%"><div class="pbtn" style="left:10px;top:17px;background:#ecf5ff;border:1px solid #b3d8ff;color:#409eff">修改</div><div class="pbtn" style="left:80px;top:17px;width:59px;background:#fef0f0;border:1px solid #fbc4c4;color:#f56c6c">删除</div></div></div>
<div class="td" style="left:0;top:398px;width:149px;height:67px;border-right:none"><div style="position:relative;width:149px;height:100%"><div class="pbtn" style="left:10px;top:17px;background:#ecf5ff;border:1px solid #b3d8ff;color:#409eff">修改</div><div class="pbtn" style="left:80px;top:17px;width:59px;background:#fef0f0;border:1px solid #fbc4c4;color:#f56c6c">删除</div></div></div>
<div class="td" style="left:0;top:465px;width:149px;height:67px;border-right:none"><div style="position:relative;width:149px;height:100%"><div class="pbtn" style="left:10px;top:17px;background:#ecf5ff;border:1px solid #b3d8ff;color:#409eff">修改</div><div class="pbtn" style="left:80px;top:17px;width:59px;background:#fef0f0;border:1px solid #fbc4c4;color:#f56c6c">删除</div></div></div>
</div>
<div class="abs" style="left:1458px;top:0;width:6px;height:485px;background:#ededed;border-left:1px solid #e8eaec"></div><div class="abs" style="left:1458px;top:0;width:6px;height:67px;background:#f8f8f9;border-left:1px solid #e8eaec;border-bottom:1px solid #e8eaec"></div>
<div class="abs" style="left:1459px;top:67px;width:5px;height:255px;background:#bdbdbd;border-radius:0 0 2px 2px"></div>
<div class="abs" style="left:0;top:478px;width:1466px;height:7px;background:#f1f1f1"></div>
<div class="abs" style="left:0;top:478px;width:1083px;height:6px;background:#bdbdbd;border-radius:3px"></div>
</div>
<div class="abs" style="left:1274px;top:801px;line-height:28px;font-size:13px;color:#606266;white-space:nowrap">共 10 条</div>
<div class="abs" style="left:1337px;top:801px;width:100px;height:28px;border:1px solid #dcdfe6;border-radius:3px;font-size:13px;color:#606266;line-height:26px;padding-left:19px">10条/页<svg class="abs" style="left:82px;top:11px" width="9" height="5" viewBox="0 0 9 5"><path d="M0.5 0.5L4.5 4.5L8.5 0.5" fill="none" stroke="#c0c4cc" stroke-width="1"/></svg></div>
<div class="abs" style="left:1457px;top:801px;width:30px;height:28px;background:#f4f4f5;border-radius:2px"><svg class="abs" style="left:12px;top:10px" width="5" height="9" viewBox="0 0 5 9"><path d="M4.5 0.5L0.5 4.5L4.5 8.5" fill="none" stroke="#c0c4cc" stroke-width="1.2"/></svg></div>
<div class="abs" style="left:1497px;top:801px;width:30px;height:28px;background:#1890ff;border-radius:2px;color:#fff;font-size:13px;font-weight:bold;text-align:center;line-height:28px">1</div>
<div class="abs" style="left:1537px;top:801px;width:30px;height:28px;background:#f4f4f5;border-radius:2px"><svg class="abs" style="left:13px;top:10px" width="5" height="9" viewBox="0 0 5 9"><path d="M0.5 0.5L4.5 4.5L0.5 8.5" fill="none" stroke="#c0c4cc" stroke-width="1.2"/></svg></div>
<div class="abs" style="left:1596px;top:801px;line-height:28px;font-size:13px;color:#606266;white-space:nowrap">前往</div>
<div class="abs" style="left:1626px;top:801px;width:46px;height:28px;border:1px solid #dcdfe6;border-radius:3px;font-size:13px;color:#606266;line-height:26px;text-align:center">1</div>
<div class="abs" style="left:1676px;top:801px;line-height:28px;font-size:13px;color:#606266">页</div>
<div class="abs" style="left:198px;top:853px;width:1511px;height:40px;background:#fff"></div>
</body></html>
